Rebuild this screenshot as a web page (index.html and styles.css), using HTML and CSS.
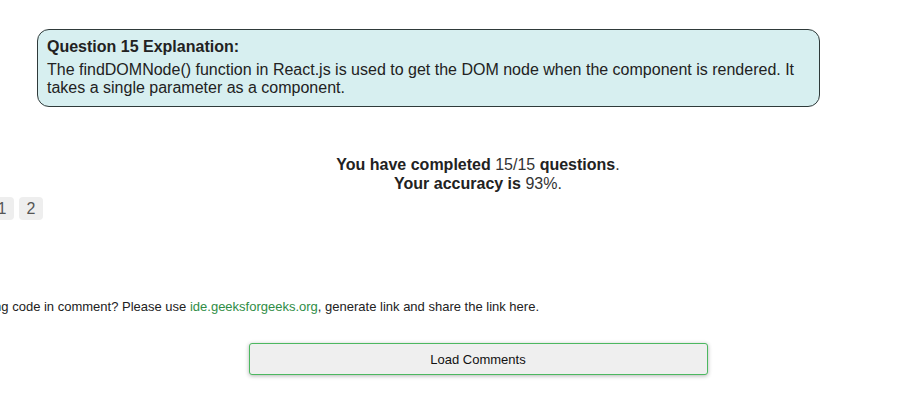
FILE: index.html
```html
<!DOCTYPE html>
<html>
<head>
<meta charset="utf-8">
<link rel="stylesheet" href="styles.css">
</head>
<body>
<div class="page">
  <div class="explain">
    <div class="explain-title">Question 15 Explanation:</div>
    <div class="explain-body">The findDOMNode() function in React.js is used to get the DOM node when the component is rendered. It takes a single parameter as a component.</div>
  </div>
  <div class="main">
    <div class="result">
      <div><b>You have completed</b> 15/15 <b>questions</b>.</div>
      <div><b>Your accuracy is</b> 93%.</div>
    </div>
  </div>
  <div class="pager">
    <span class="pg">1</span>
    <span class="pg">2</span>
  </div>
  <div class="comment-note">
    <span>Writing code in comment? Please use <a class="ide" href="#">ide.geeksforgeeks.org</a>, generate link and share the link here.</span>
  </div>
  <div class="main">
    <button class="load">Load Comments</button>
  </div>
</div>
</body>
</html>
```

FILE: styles.css
```css
html, body {
  margin: 0;
  padding: 0;
  background: #ffffff;
  overflow: hidden;
}
body {
  font-family: "Liberation Sans", Arial, sans-serif;
  color: #222;
  width: 906px;
  height: 405px;
}
.page {
  padding-top: 29px;
}
.explain {
  margin-left: 37px;
  width: 783px;
  box-sizing: border-box;
  border: 1px solid #2f3a3a;
  border-radius: 12px;
  background: #d7eff0;
  padding: 7px 9px 8px 9px;
  font-size: 16px;
  color: #222;
}
.explain-title {
  font-weight: bold;
  line-height: 19px;
  margin-bottom: 5px;
}
.explain-body {
  line-height: 18.4px;
}
.main {
  padding-left: 50px;
  display: flex;
  justify-content: center;
}
.result {
  margin-top: 48px;
  text-align: center;
  font-size: 16px;
  line-height: 19.2px;
  color: #333;
}
.result b {
  color: #222;
}
.pager {
  margin-top: 4px;
  margin-left: -10px;
  display: flex;
  gap: 5px;
}
.pg {
  display: inline-flex;
  align-items: center;
  justify-content: center;
  width: 24px;
  height: 23px;
  background: #eeeeee;
  border-radius: 4px;
  font-size: 16px;
  color: #555;
}
.comment-note {
  margin-top: 79px;
  width: 539px;
  display: flex;
  justify-content: flex-end;
  white-space: nowrap;
  font-size: 13px;
  line-height: 15px;
  color: #222;
}
.ide {
  color: #2f8d46;
  text-decoration: none;
}
.load {
  margin-top: 29px;
  width: 459px;
  height: 32px;
  box-sizing: border-box;
  background: #efefef;
  border: 1px solid #4cb860;
  border-radius: 3px;
  box-shadow: 0 1px 4px rgba(0, 0, 0, 0.3);
  font-family: "Liberation Sans", Arial, sans-serif;
  font-size: 13px;
  color: #111;
  padding: 0;
}
```
